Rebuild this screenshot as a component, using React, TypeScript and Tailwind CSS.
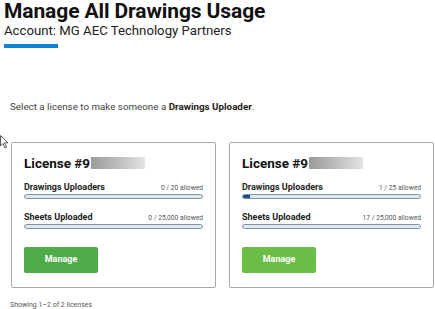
import React from 'react';

type License = {
  id: string;
  uploaders: number;
  uploadersMax: number;
  sheets: number;
  sheetsMax: string;
  hovered?: boolean;
};

const licenses: License[] = [
  { id: '1', uploaders: 0, uploadersMax: 20, sheets: 0, sheetsMax: '25,000' },
  { id: '2', uploaders: 1, uploadersMax: 25, sheets: 17, sheetsMax: '25,000', hovered: true },
];

function Bar({ pct }: { pct: number }) {
  return (
    <div className="h-[5px] w-full rounded-full border border-[#7b93ad] bg-[#e3e6ea] overflow-hidden">
      <div className="h-full bg-[#1b4f8a]" style={{ width: `${pct}%` }} />
    </div>
  );
}

function LicenseCard({ lic }: { lic: License }) {
  const upPct = (lic.uploaders / lic.uploadersMax) * 100;
  return (
    <div className="w-[205px] h-[146px] border border-[#a9a9a9] rounded-[2px] bg-white px-[12px] pt-[10px]">
      <div className="flex items-center h-[20px]">
        <span className="text-[13.5px] font-bold text-[#111]">License #9</span>
        <span className="ml-[1px] h-[12px] w-[54px] bg-gradient-to-r from-[#9b9b9b] via-[#bdbdbd] to-[#e4e4e4]" />
      </div>

      <div className="mt-[8px] h-[12px] flex items-end justify-between">
        <span className="text-[9px] font-bold text-[#222] leading-[12px]">Drawings Uploaders</span>
        <span className="text-[6.7px] text-[#555] leading-[10px]">
          {lic.uploaders} / {lic.uploadersMax} allowed
        </span>
      </div>
      <div className="mt-[1px]">
        <Bar pct={upPct} />
      </div>

      <div className="mt-[12px] h-[12px] flex items-end justify-between">
        <span className="text-[9px] font-bold text-[#222] leading-[12px]">Sheets Uploaded</span>
        <span className="text-[6.7px] text-[#555] leading-[10px]">
          {lic.sheets} / {lic.sheetsMax} allowed
        </span>
      </div>
      <div className="mt-[1px]">
        <Bar pct={0} />
      </div>

      <button
        className={`mt-[18px] w-[74px] h-[26px] rounded-[2px] text-white text-[9px] font-bold ${
          lic.hovered ? 'bg-[#6cbd45]' : 'bg-[#4eab47]'
        }`}
      >
        Manage
      </button>
    </div>
  );
}

export default function App() {
  return (
    <div className="relative w-[435px] h-[309px] overflow-hidden bg-white font-['Roboto',sans-serif] text-[#222]">
      <div className="px-[4px]">
        <h1 className="text-[21px] font-bold leading-[22px] text-[#111] tracking-[-0.1px]">
          Manage All Drawings Usage
        </h1>
        <p className="text-[13.2px] leading-[18px] text-[#222]">Account: MG AEC Technology Partners</p>
        <div className="mt-[4px] h-[4px] w-[54px] bg-[#0a84d8]" />
      </div>

      <p className="mt-[51px] pl-[10px] text-[9.8px] leading-[15px] text-[#444]">
        Select a license to make someone a <span className="font-bold text-[#222]">Drawings Uploader</span>.
      </p>

      <div className="mt-[28px] flex gap-[13px] pl-[11px]">
        {licenses.map((l) => (
          <LicenseCard key={l.id} lic={l} />
        ))}
      </div>

      <p className="mt-[12px] pl-[10px] text-[7px] leading-[10px] text-[#555]">Showing 1–2 of 2 licenses</p>

      {/* mouse pointer */}
      <svg className="absolute left-0 top-[135px]" width="10" height="15" viewBox="0 0 10 15">
        <path d="M0.5 0.5 L0.5 11 L3 8.5 L5 13 L6.5 12.3 L4.6 7.8 L8 7.8 Z" fill="#fff" stroke="#333" strokeWidth="0.8" />
      </svg>
    </div>
  );
}
